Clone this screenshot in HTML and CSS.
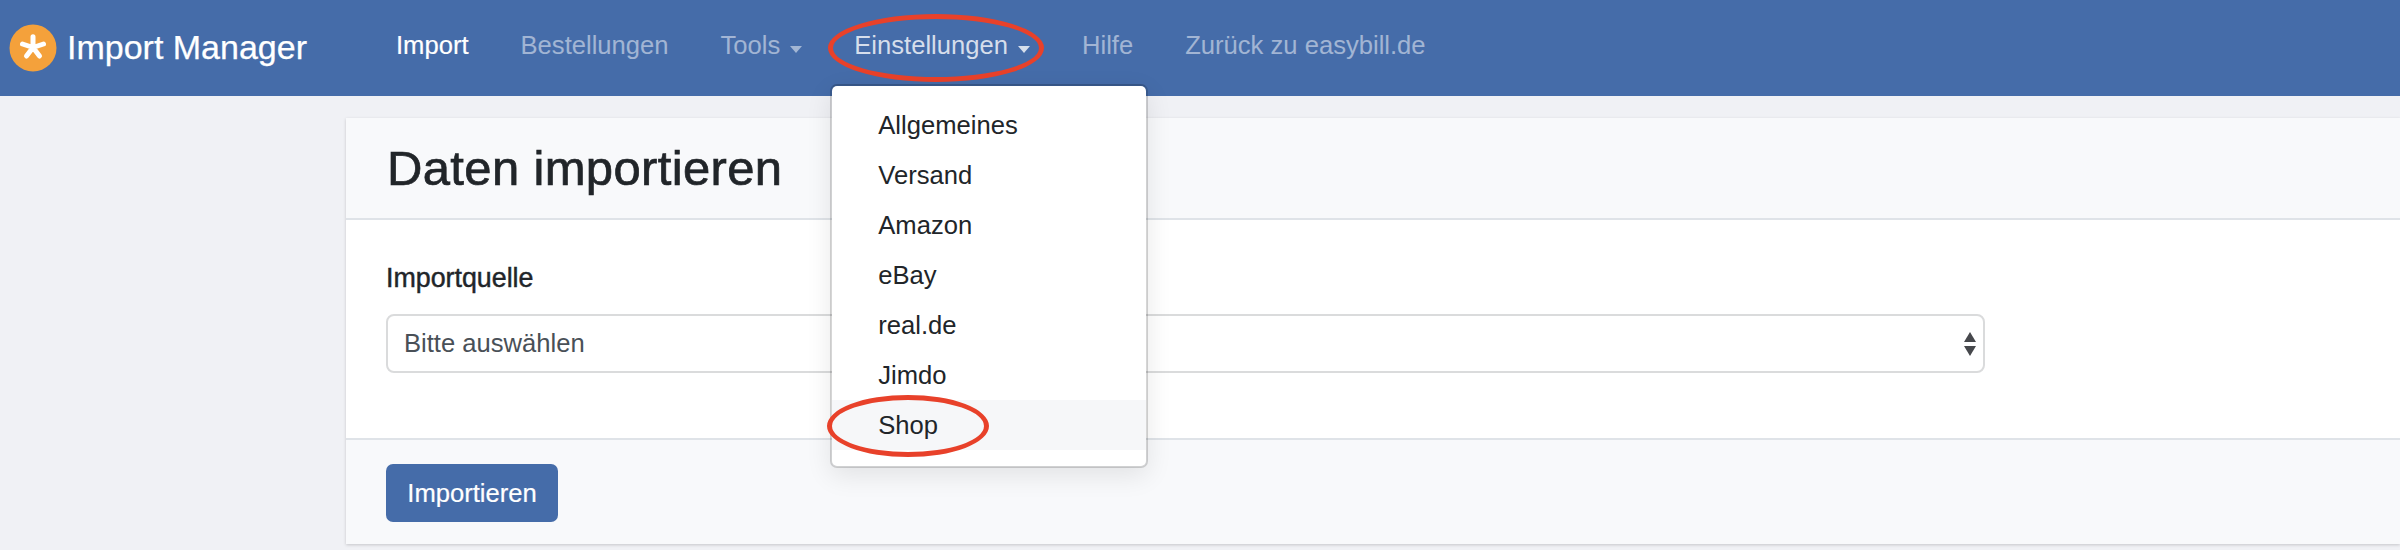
FILE: index.html
```html
<!DOCTYPE html>
<html lang="de">
<head>
<meta charset="utf-8">
<title>Import Manager</title>
<link rel="stylesheet" href="styles.css">
</head>
<body>
<header class="navbar">
  <a class="brand" href="#">
    <svg class="logo" viewBox="0 0 48 48" aria-hidden="true">
      <circle cx="24" cy="24" r="23.5" fill="#f4a13b"/>
      <path d="M24 23.5V12.8M24 23.5L13.5 20M24 23.5L34.5 20M24 23.5L17.5 32M24 23.5L30.5 32" stroke="#fff" stroke-width="5" stroke-linecap="round" fill="none"/>
    </svg>
    <span class="brand-name">Import Manager</span>
  </a>
  <nav class="nav">
    <a class="nav-link active" href="#">Import</a>
    <a class="nav-link" href="#">Bestellungen</a>
    <a class="nav-link" href="#">Tools<span class="caret"></span></a>
    <div class="nav-dropdown">
      <a class="nav-link open" href="#">Einstellungen<span class="caret"></span></a>
      <span class="ring ring-nav"></span>
      <ul class="menu">
        <li><a class="menu-item" href="#">Allgemeines</a></li>
        <li><a class="menu-item" href="#">Versand</a></li>
        <li><a class="menu-item" href="#">Amazon</a></li>
        <li><a class="menu-item" href="#">eBay</a></li>
        <li><a class="menu-item" href="#">real.de</a></li>
        <li><a class="menu-item" href="#">Jimdo</a></li>
        <li class="menu-last"><a class="menu-item hover" href="#">Shop</a><span class="ring ring-shop"></span></li>
      </ul>
    </div>
    <a class="nav-link" href="#">Hilfe</a>
    <a class="nav-link" href="#">Zurück zu easybill.de</a>
  </nav>
</header>
<main class="card">
  <div class="card-header"><h1 class="title">Daten importieren</h1></div>
  <div class="card-body">
    <label class="label" for="source">Importquelle</label>
    <div class="select-wrap">
      <select class="select" id="source"><option>Bitte auswählen</option></select>
    </div>
  </div>
  <div class="card-footer"><button class="btn" type="button">Importieren</button></div>
</main>
</body>
</html>
```
FILE: styles.css
```css
* { box-sizing: border-box; }
html, body { height: 100%; }
body {
  margin: 0;
  overflow: hidden;
  background: #f0f1f5;
  color: #212529;
  font-family: "Liberation Sans", Arial, sans-serif;
  font-size: 25.6px;
  line-height: 1.5;
}
a { text-decoration: none; color: inherit; }

.navbar {
  display: flex;
  align-items: center;
  height: 96px;
  padding-left: 9px;
  background: #456ca9;
}
.brand { display: flex; align-items: center; gap: 10px; color: #fff; }
.logo { display: block; width: 48px; height: 48px; }
.brand-name { font-size: 34px; line-height: 1; position: relative; top: -1px; -webkit-text-stroke: .25px #fff; }
.nav { display: flex; align-items: center; margin-left: 63px; }
.nav-link {
  display: block;
  padding: 0 26px;
  color: rgba(255, 255, 255, .5);
  line-height: 48px;
  position: relative;
  top: -3px;
  white-space: nowrap;
}
.nav-link.active { color: #fff; -webkit-text-stroke: .2px #fff; }
.nav-link.open { color: rgba(255, 255, 255, .78); }
.caret {
  display: inline-block;
  margin-left: 10px;
  vertical-align: 1px;
  border-top: 7px solid currentColor;
  border-left: 6px solid transparent;
  border-right: 6px solid transparent;
}
.nav-dropdown { position: relative; }

.ring {
  position: absolute;
  border: 5px solid #e8412a;
  border-radius: 50%;
  pointer-events: none;
}
.ring-nav { left: 0; top: -10px; width: 216px; height: 68px; }
.ring-shop { left: -5px; top: -5px; width: 162px; height: 62px; }

.menu {
  position: absolute;
  left: 2px;
  top: 60px;
  width: 318px;
  margin: 0;
  padding: 14px 0 16px;
  list-style: none;
  background: #fff;
  border: 2px solid rgba(0, 0, 0, .16);
  border-top-color: rgba(0, 0, 0, .2);
  border-radius: 7px;
  background-clip: padding-box;
  box-shadow: 0 8px 26px rgba(0, 0, 0, .09);
  z-index: 5;
}
.menu-last { position: relative; }
.menu-item {
  display: block;
  height: 50px;
  padding-left: 46px;
  line-height: 51px;
  color: #212529;
}
.menu-item.hover { background: #f6f7f9; }

.card {
  margin: 22px 0 0 346px;
  background: #fff;
  box-shadow: 0 1px 3px rgba(0, 0, 0, .18);
}
.card-header {
  height: 102px;
  padding-left: 41px;
  background: #f8f9fb;
  border-bottom: 2px solid #dfe3e8;
  display: flex;
  align-items: center;
}
.title {
  margin: 0;
  font-size: 49px;
  font-weight: 400;
  line-height: 1;
  letter-spacing: .35px;
  -webkit-text-stroke: .7px #212529;
}
.card-body { height: 218px; padding: 38px 42px 0 40px; }
.label {
  display: block;
  width: max-content;
  font-size: 26.8px;
  line-height: 40px;
  -webkit-text-stroke: .45px #212529;
  margin-bottom: 16px;
}
.select-wrap { position: relative; width: 1599px; }
.select-wrap::before, .select-wrap::after {
  content: "";
  position: absolute;
  right: 9px;
  border-left: 6px solid transparent;
  border-right: 6px solid transparent;
  pointer-events: none;
}
.select-wrap::before { top: 18px; border-bottom: 10px solid #46484c; }
.select-wrap::after { top: 32px; border-top: 10px solid #46484c; }
.select {
  display: block;
  width: 100%;
  height: 59px;
  padding: 0 16px;
  appearance: none;
  -webkit-appearance: none;
  background: #fff;
  border: 2px solid #dadbdc;
  border-radius: 8px;
  color: #495057;
  font: inherit;
}
.card-footer {
  height: 106px;
  padding: 24px 0 0 40px;
  background: #f8f9fb;
  border-top: 2px solid #dfe3e8;
}
.btn {
  display: block;
  width: 172px;
  height: 58px;
  padding: 0;
  border: 0;
  border-radius: 7px;
  background: #456ca9;
  color: #fff;
  font: inherit;
  -webkit-text-stroke: .2px #fff;
}
```
